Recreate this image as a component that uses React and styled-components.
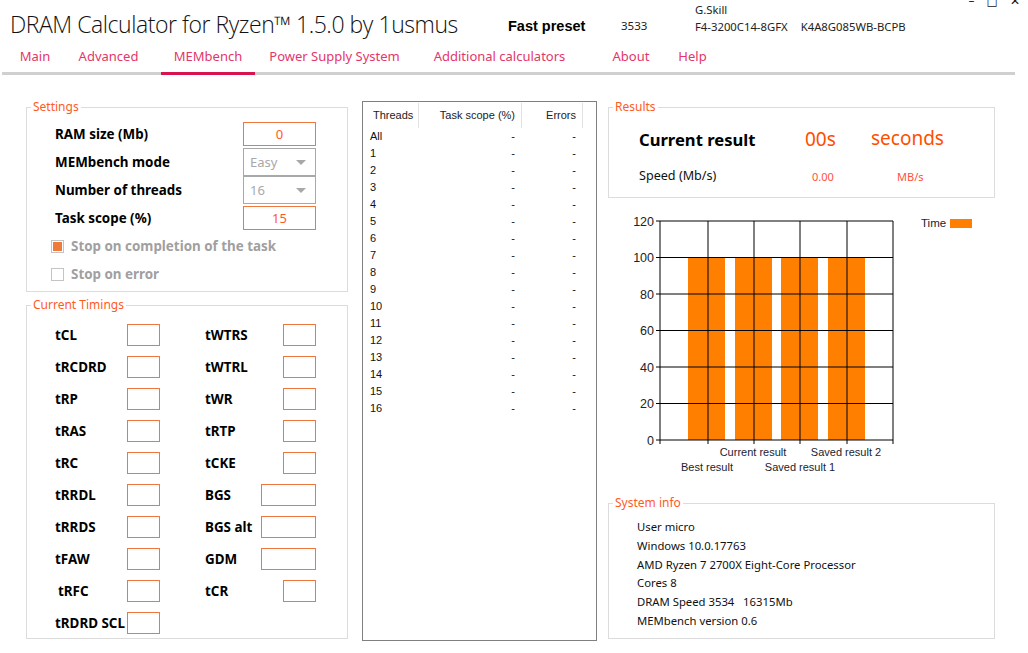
import React from 'react'
import styled, { createGlobalStyle } from 'styled-components'

const GlobalStyle = createGlobalStyle`
    html, body {
        margin: 0;
        padding: 0;
        background: #fff;
    }
    body {
        font-family: "Noto Sans", "Open Sans", sans-serif;
        color: #111;
    }
    * {
        box-sizing: border-box;
    }
`

const ORANGE = '#f0783e'
const ORANGE_TEXT = '#ff5a1f'

const Window = styled.div`
    width: 1028px;
    height: 653px;
    overflow: hidden;
    background: #fff;
`

/* ---------- title bar ---------- */

const TitleBar = styled.header`
    display: flex;
    align-items: flex-start;
    height: 45px;
`

const Title = styled.h1`
    margin: 0 0 0 10px;
    padding-top: 10px;
    width: 498px;
    font-family: "Open Sans", sans-serif;
    font-weight: 300;
    font-size: 23px;
    letter-spacing: -0.45px;
    line-height: 28px;
    color: #111;
    white-space: nowrap;
`

const Preset = styled.div`
    width: 113px;
    padding-top: 18px;
    font-family: "Liberation Sans", Arial, sans-serif;
    font-weight: bold;
    font-size: 14.5px;
    line-height: 16px;
    color: #000;
`

const Freq = styled.div`
    width: 74px;
    padding-top: 18px;
    font-size: 11.5px;
    line-height: 16px;
    color: #222;
`

const Module = styled.div`
    display: flex;
    flex-direction: column;
    padding-top: 1px;
    font-size: 11.3px;
    line-height: 17px;
    color: #222;
`

const ModuleRow = styled.div`
    display: flex;
    gap: 13px;
`

const Controls = styled.div`
    display: flex;
    gap: 12px;
    margin-left: auto;
    margin-right: 8px;
    margin-top: -5px;
    font-family: "DejaVu Sans", sans-serif;
    font-size: 12px;
    line-height: 12px;
    color: #111;
`

/* ---------- tabs ---------- */

const TabBar = styled.nav`
    display: flex;
    width: 1013px;
    margin-left: 2px;
    border-bottom: 3px solid #d0d0d0;
`

const Tab = styled.div`
    position: relative;
    display: flex;
    justify-content: center;
    width: ${({ $w }) => $w}px;
    height: 27px;
    padding-top: 1px;
    font-size: 13px;
    line-height: 20px;
    color: #e5356b;
    white-space: nowrap;

    &::after {
        content: '';
        display: ${({ $active }) => ($active ? 'block' : 'none')};
        position: absolute;
        left: 50%;
        bottom: -3px;
        width: 94px;
        height: 3px;
        transform: translateX(-50%);
        background: #d7144f;
    }
`

/* ---------- body ---------- */

const Body = styled.main`
    display: flex;
    align-items: flex-start;
    padding: 24px 0 0 26px;
`

const LeftCol = styled.div`
    display: flex;
    flex-direction: column;
    gap: 5px;
    width: 322px;
`

const Group = styled.fieldset`
    margin: ${({ $mt }) => $mt || 0}px 0 0 0;
    padding: 0;
    min-width: 0;
    height: ${({ $h }) => $h}px;
    border: 1px solid #dcdcdc;
`

const Legend = styled.legend`
    margin-left: 4px;
    padding: 0 2px;
    font-size: 12px;
    line-height: 16px;
    color: ${ORANGE_TEXT};
`

/* settings */

const SettingsBody = styled.div`
    padding: 5px 0 0 28px;
`

const SettingRow = styled.div`
    display: grid;
    grid-template-columns: 188px 73px;
    align-items: center;
    height: 28px;
`

const Label = styled.span`
    font-size: 13.4px;
    font-weight: bold;
    color: ${({ $muted }) => ($muted ? '#a0a0a0' : '#000')};
    padding-left: ${({ $indent }) => $indent || 0}px;
    white-space: nowrap;
`

const TextBox = styled.div`
    width: ${({ $w }) => $w || 73}px;
    height: ${({ $h }) => $h || 24}px;
    border: 1px solid ${ORANGE};
    font-size: 13px;
    line-height: 22px;
    text-align: center;
    color: ${ORANGE_TEXT};
`

const Select = styled.div`
    position: relative;
    width: 73px;
    height: 28px;
    border: 1px solid #a8a8a8;
    padding-left: 6px;
    font-size: 13px;
    line-height: 26px;
    color: #a8a8a8;

    &::after {
        content: '';
        position: absolute;
        right: 9px;
        top: 11px;
        border-left: 5px solid transparent;
        border-right: 5px solid transparent;
        border-top: 5px solid #a8a8a8;
    }
`

const CheckRow = styled.div`
    display: flex;
    align-items: center;
    gap: 7px;
    height: 28px;
    margin-left: -4px;
`

const CheckBox = styled.span`
    width: 13px;
    height: 13px;
    border: 1px solid #c4c4c4;
    padding: 1px;
    background: ${({ $checked }) => ($checked ? '#f07a3c' : '#fff')};
    background-clip: content-box;
`

/* timings */

const TimingsBody = styled.div`
    padding: 6px 0 0 28px;
`

const TimingRow = styled.div`
    display: grid;
    grid-template-columns: 72px 33px 45px 111px;
    align-items: center;
    height: 32px;
`

const RightCell = styled.div`
    display: flex;
    align-items: center;
    justify-content: space-between;
`

/* thread table */

const ThreadTable = styled.div`
    width: 235px;
    height: 540px;
    margin: 2px 0 0 14px;
    border: 1px solid #808080;
    font-family: "Liberation Sans", Arial, sans-serif;
    font-size: 11px;
    color: #111;
`

const TableHead = styled.div`
    display: grid;
    grid-template-columns: 56px 103px 61px;
    height: 26px;
    padding-top: 1px;
`

const HeadCell = styled.div`
    border-right: 1px solid #e3e3e3;
    line-height: 24px;
    text-align: ${({ $right }) => ($right ? 'right' : 'left')};
    padding: ${({ $right }) => ($right ? '0 6px 0 0' : '0 0 0 10px')};
    color: #222;
`

const TableRow = styled.div`
    display: grid;
    grid-template-columns: 56px 103px 61px;
    height: 17px;
    line-height: 17px;
`

const Cell = styled.div`
    text-align: ${({ $right }) => ($right ? 'right' : 'left')};
    padding: ${({ $right }) => ($right ? '0 7px 0 0' : '0 0 0 7px')};
`

/* right column */

const RightCol = styled.div`
    display: flex;
    flex-direction: column;
    width: 387px;
    margin-left: 11px;
`

const ResultsBody = styled.div`
    padding: 11px 0 0 30px;
`

const ResultRow = styled.div`
    display: grid;
    grid-template-columns: ${({ $cols }) => $cols};
    align-items: center;
    height: ${({ $h }) => $h}px;
    margin-top: ${({ $mt }) => $mt || 0}px;
`

const BigLabel = styled.span`
    font-size: 16.6px;
    font-weight: bold;
    color: #000;
`

const BigValue = styled.span`
    font-size: 19px;
    color: #ff4d00;
    margin-top: ${({ $up }) => ($up ? -3 : 0)}px;
`

const SmallLabel = styled.span`
    font-size: 12.6px;
    color: #111;
`

const SmallValue = styled.span`
    font-size: 11px;
    color: #ff5040;
    margin-top: 2px;
`

const ChartBox = styled.div`
    height: 285px;
    margin-top: 7px;
    font-family: "Liberation Sans", Arial, sans-serif;
`

const InfoBody = styled.div`
    padding: 7px 0 0 28px;
`

const InfoLine = styled.div`
    font-size: 11.3px;
    line-height: 18.8px;
    color: #111;
    white-space: pre;
`

/* ---------- data ---------- */

const tabs = [
    { name: 'Main', w: 66 },
    { name: 'Advanced', w: 81 },
    { name: 'MEMbench', w: 118, active: true },
    { name: 'Power Supply System', w: 135 },
    { name: 'Additional calculators', w: 195 },
    { name: 'About', w: 68 },
    { name: 'Help', w: 55 },
]

const timings = [
    ['tCL', 'tWTRS', false],
    ['tRCDRD', 'tWTRL', false],
    ['tRP', 'tWR', false],
    ['tRAS', 'tRTP', false],
    ['tRC', 'tCKE', false],
    ['tRRDL', 'BGS', true],
    ['tRRDS', 'BGS alt', true],
    ['tFAW', 'GDM', true],
    ['tRFC', 'tCR', false],
    ['tRDRD SCL', null, false],
]

const threads = ['All', ...Array.from({ length: 16 }, (_, i) => String(i + 1))]

const sysInfo = [
    'User micro',
    'Windows 10.0.17763',
    'AMD Ryzen 7 2700X Eight-Core Processor',
    'Cores 8',
    'DRAM Speed 3534   16315Mb',
    'MEMbench version 0.6',
]

/* ---------- chart ---------- */

function Chart() {
    const x0 = 52
    const x1 = 285
    const yOf = (v) => 235 - (v / 120) * 219
    const verticals = [52, 100, 146, 192, 239, 285]
    const bars = [80, 127, 173, 220]
    const ticks = [0, 20, 40, 60, 80, 100, 120]
    return (
        <svg width="386" height="285" viewBox="0 0 386 285">
            {bars.map((bx) => (
                <rect key={bx} x={bx} y={yOf(100)} width="37" height={235 - yOf(100)} fill="#ff8000" />
            ))}
            {ticks.map((t) => (
                <g key={t}>
                    <line x1={x0 - 4} x2={x1} y1={yOf(t)} y2={yOf(t)} stroke="#000" strokeWidth="1" />
                    <text x="46" y={yOf(t) + 4.5} fontSize="12.5" textAnchor="end" fill="#222">{t}</text>
                </g>
            ))}
            {verticals.map((vx) => (
                <line key={vx} x1={vx} x2={vx} y1={yOf(120)} y2={239} stroke="#000" strokeWidth="1" />
            ))}
            <text x="145" y="251" fontSize="11" textAnchor="middle" fill="#1c1c30">Current result</text>
            <text x="238" y="251" fontSize="11" textAnchor="middle" fill="#1c1c30">Saved result 2</text>
            <text x="99" y="266" fontSize="11" textAnchor="middle" fill="#1c1c30">Best result</text>
            <text x="192" y="266" fontSize="11" textAnchor="middle" fill="#1c1c30">Saved result 1</text>
            <text x="313" y="22" fontSize="11.5" fill="#1c1c30">Time</text>
            <rect x="342" y="14" width="22" height="9" fill="#ff8000" />
        </svg>
    )
}

export default function App() {
    return (
        <>
            <GlobalStyle />
            <Window>
                <TitleBar>
                    <Title>DRAM Calculator for Ryzen™ 1.5.0 by 1usmus</Title>
                    <Preset>Fast preset</Preset>
                    <Freq>3533</Freq>
                    <Module>
                        <span>G.Skill</span>
                        <ModuleRow>
                            <span>F4-3200C14-8GFX</span>
                            <span>K4A8G085WB-BCPB</span>
                        </ModuleRow>
                    </Module>
                    <Controls>
                        <span>–</span>
                        <span>□</span>
                        <span>✕</span>
                    </Controls>
                </TitleBar>

                <TabBar>
                    {tabs.map((t) => (
                        <Tab key={t.name} $w={t.w} $active={t.active}>{t.name}</Tab>
                    ))}
                </TabBar>

                <Body>
                    <LeftCol>
                        <Group $h={193}>
                            <Legend>Settings</Legend>
                            <SettingsBody>
                                <SettingRow>
                                    <Label>RAM size (Mb)</Label>
                                    <TextBox>0</TextBox>
                                </SettingRow>
                                <SettingRow>
                                    <Label>MEMbench mode</Label>
                                    <Select>Easy</Select>
                                </SettingRow>
                                <SettingRow>
                                    <Label>Number of threads</Label>
                                    <Select>16</Select>
                                </SettingRow>
                                <SettingRow>
                                    <Label>Task scope (%)</Label>
                                    <TextBox>15</TextBox>
                                </SettingRow>
                                <CheckRow>
                                    <CheckBox $checked />
                                    <Label $muted>Stop on completion of the task</Label>
                                </CheckRow>
                                <CheckRow>
                                    <CheckBox />
                                    <Label $muted>Stop on error</Label>
                                </CheckRow>
                            </SettingsBody>
                        </Group>

                        <Group $h={342}>
                            <Legend>Current Timings</Legend>
                            <TimingsBody>
                                {timings.map(([left, right, wide]) => (
                                    <TimingRow key={left}>
                                        <Label $indent={left === 'tRFC' ? 3 : 0}>{left}</Label>
                                        <TextBox $w={33} $h={22} />
                                        <span />
                                        {right && (
                                            <RightCell>
                                                <Label>{right}</Label>
                                                <TextBox $w={wide ? 55 : 33} $h={22} />
                                            </RightCell>
                                        )}
                                    </TimingRow>
                                ))}
                            </TimingsBody>
                        </Group>
                    </LeftCol>

                    <ThreadTable>
                        <TableHead>
                            <HeadCell>Threads</HeadCell>
                            <HeadCell $right>Task scope (%)</HeadCell>
                            <HeadCell $right>Errors</HeadCell>
                        </TableHead>
                        {threads.map((t) => (
                            <TableRow key={t}>
                                <Cell>{t}</Cell>
                                <Cell $right>-</Cell>
                                <Cell $right>-</Cell>
                            </TableRow>
                        ))}
                    </ThreadTable>

                    <RightCol>
                        <Group $h={99}>
                            <Legend>Results</Legend>
                            <ResultsBody>
                                <ResultRow $cols="166px 66px auto" $h={24}>
                                    <BigLabel>Current result</BigLabel>
                                    <BigValue>00s</BigValue>
                                    <BigValue $up>seconds</BigValue>
                                </ResultRow>
                                <ResultRow $cols="173px 85px auto" $h={20} $mt={15}>
                                    <SmallLabel>Speed (Mb/s)</SmallLabel>
                                    <SmallValue>0.00</SmallValue>
                                    <SmallValue>MB/s</SmallValue>
                                </ResultRow>
                            </ResultsBody>
                        </Group>

                        <ChartBox>
                            <Chart />
                        </ChartBox>

                        <Group $h={144} $mt={5}>
                            <Legend>System info</Legend>
                            <InfoBody>
                                {sysInfo.map((line) => (
                                    <InfoLine key={line}>{line}</InfoLine>
                                ))}
                            </InfoBody>
                        </Group>
                    </RightCol>
                </Body>
            </Window>
        </>
    )
}
